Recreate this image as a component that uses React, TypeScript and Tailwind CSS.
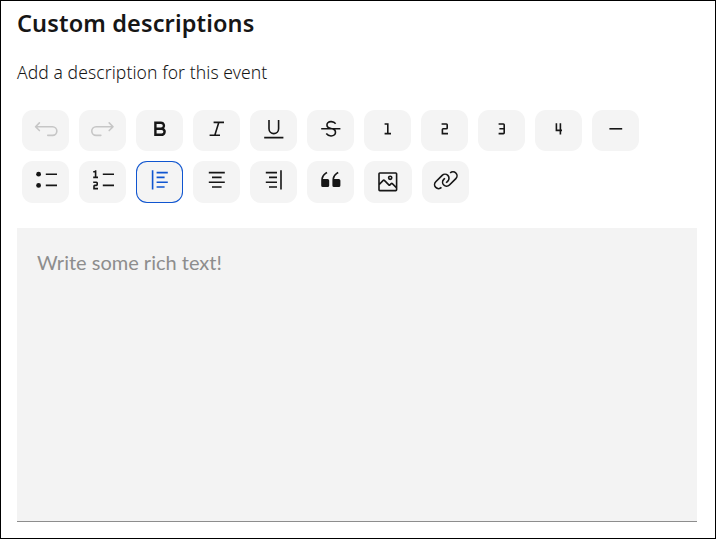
import type { ReactNode } from "react";

type Tool = { label: string; icon: ReactNode; disabled?: boolean; active?: boolean; low?: boolean };

const tools: Tool[] = [
  {
    label: "Undo",
    disabled: true,
    icon: <path fill="none" stroke="currentColor" strokeWidth="2" strokeLinecap="round" strokeLinejoin="round" d="M8 8.6 3.2 13.4 8 18.2M3.2 13.4H24.4a5.4 5.4 0 0 1 0 10.8H18.4" />,
  },
  {
    label: "Redo",
    disabled: true,
    icon: <path fill="none" stroke="currentColor" strokeWidth="2" strokeLinecap="round" strokeLinejoin="round" d="M24 8.6 28.8 13.4 24 18.2M28.8 13.4H7.6a5.4 5.4 0 0 0 0 10.8H13.6" />,
  },
  {
    label: "Bold",
    icon: <path d="M18.25,25H9V7h8.5a5.25,5.25,0,0,1,4,8.65A5.25,5.25,0,0,1,18.25,25ZM12,22h6.23a2.25,2.25,0,1,0,0-4.5H12Zm0-7.5h5.5a2.25,2.25,0,1,0,0-4.5H12Z" />,
  },
  { label: "Italic", icon: <path d="M25 9V7H12v2h5.14L12.77 23H7v2h13v-2h-5.14L19.23 9z" /> },
  { label: "Underline", icon: <path d="M4 26H28V28H4zM16 23a7 7 0 0 1-7-7V5h2V16a5 5 0 0 0 10 0V5h2V16a7 7 0 0 1-7 7z" /> },
  {
    label: "Strikethrough",
    icon: <path d="M28,15H17.9563c-.4522-.1237-.9037-.2324-1.3381-.3352-2.8077-.6641-4.396-1.1506-4.396-3.4231a2.8684,2.8684,0,0,1,.7866-2.145,4.7888,4.7888,0,0,1,3.0137-1.09c2.8291-.07,4.1347.8894,5.2011,2.3484l1.6153-1.1792A7.4727,7.4727,0,0,0,16.0171,6.0054,6.7708,6.7708,0,0,0,11.6147,7.662a4.8269,4.8269,0,0,0-1.3927,3.58A4.3723,4.3723,0,0,0,11.9556,15H4v2H17.6519c1.9668.57,3.143,1.3123,3.1733,3.3579a3.119,3.119,0,0,1-.8623,2.3931A5.8241,5.8241,0,0,1,16.2432,24a6.6342,6.6342,0,0,1-5.1451-2.6912L9.5649,22.593A8.5262,8.5262,0,0,0,16.2119,26h.0088a7.8,7.8,0,0,0,5.1323-1.8081,5.0477,5.0477,0,0,0,1.4722-3.8389A4.9542,4.9542,0,0,0,21.6656,17H28Z" />,
  },
  { label: "Heading 1", icon: <path d="M17 21V9h-5v2h3v10h-3v2h8v-2z" /> },
  { label: "Heading 2", icon: <path d="M20 23H12V17a2 2 0 0 1 2-2h4V11H12V9h6a2 2 0 0 1 2 2v4a2 2 0 0 1-2 2H14v4h6z" /> },
  { label: "Heading 3", icon: <path d="M18 9H12v2h6v4H13v2h5v4H12v2h6a2 2 0 0 0 2-2V11a2 2 0 0 0-2-2z" /> },
  { label: "Heading 4", icon: <path d="M17 9v8h-3V9h-2v10h5v4h2v-4h1v-2h-1V9z" /> },
  { label: "Divider", icon: <path d="M8 15h16v2H8z" /> },
  {
    label: "Bulleted list",
    icon: (
      <>
        <circle cx="7" cy="9" r="3" />
        <circle cx="7" cy="23" r="3" />
        <path d="M16 22H30V24H16zM16 8H30V10H16z" />
      </>
    ),
  },
  {
    label: "Numbered list",
    icon: <path d="M16 22H30V24H16zM16 8H30V10H16zM8 12V4H6v1H4v2h2v5H4v2h6v-2zM10,28H4V24a2,2,0,0,1,2-2H8V20H4V18H8a2,2,0,0,1,2,2v2a2,2,0,0,1-2,2H6v2h4Z" />,
  },
  { label: "Align left", active: true, icon: <path d="M12 6H26V8H12zM12 12H22V14H12zM12 18H26V20H12zM12 24H22V26H12zM6 4H8V28H6z" /> },
  { label: "Align center", icon: <path d="M6 6H26V8H6zM10 12H22V14H10zM6 18H26V20H6zM10 24H22V26H10z" /> },
  { label: "Align right", icon: <path d="M6 6H20V8H6zM10 12H20V14H10zM6 18H20V20H6zM10 24H20V26H10zM24 4H26V28H24z" /> },
  {
    label: "Quote",
    icon: <path d="M12,15H6.11A9,9,0,0,1,10,8.86l1.79-1.2L10.69,6,8.9,7.2A11,11,0,0,0,4,16.35V23a2,2,0,0,0,2,2h6a2,2,0,0,0,2-2V17A2,2,0,0,0,12,15ZM26,15H20.11A9,9,0,0,1,24,8.86l1.79-1.2L24.7,6,22.9,7.2A11,11,0,0,0,18,16.35V23a2,2,0,0,0,2,2h6a2,2,0,0,0,2-2V17A2,2,0,0,0,26,15Z" />,
  },
  {
    label: "Image",
    low: true,
    icon: <path d="M19,14a3,3,0,1,0-3-3A3,3,0,0,0,19,14Zm0-4a1,1,0,1,1-1,1A1,1,0,0,1,19,10ZM26,4H6A2,2,0,0,0,4,6V26a2,2,0,0,0,2,2H26a2,2,0,0,0,2-2V6A2,2,0,0,0,26,4Zm0,22H6V20l5-5,5.59,5.59a2,2,0,0,0,2.82,0L21,19l5,5Zm0-4.83-3.59-3.59a2,2,0,0,0-2.82,0L18,19.17l-5.59-5.59a2,2,0,0,0-2.82,0L6,17.17V6H26Z" />,
  },
  {
    label: "Link",
    icon: <path d="M29.25,6.76a6,6,0,0,0-8.5,0l1.42,1.42a4,4,0,1,1,5.67,5.67l-8,8a4,4,0,1,1-5.67-5.66l1.41-1.42-1.41-1.42-1.42,1.42a6,6,0,0,0,0,8.5A6,6,0,0,0,17,25a6,6,0,0,0,4.27-1.76l8-8A6,6,0,0,0,29.25,6.76ZM4.19,24.82a4,4,0,0,1,0-5.67l8-8a4,4,0,0,1,5.67,0A3.94,3.94,0,0,1,19,14a4,4,0,0,1-1.17,2.85L15.71,19l1.42,1.42,2.12-2.12a6,6,0,0,0-8.51-8.51l-8,8a6,6,0,0,0,0,8.51A6,6,0,0,0,7,28a6.07,6.07,0,0,0,4.28-1.76L9.86,24.82A4,4,0,0,1,4.19,24.82Z" />,
  },
];

function ToolButton({ tool, tall }: { tool: Tool; tall: boolean }) {
  const tone = tool.active
    ? "text-[#0f55d0] ring-1 ring-inset ring-[#0f55d0]"
    : tool.disabled
      ? "text-[#c6c6c6]"
      : "text-[#161616]";
  return (
    <button
      type="button"
      aria-label={tool.label}
      disabled={tool.disabled}
      className={`flex shrink-0 items-start justify-center rounded-[11px] bg-[#f4f4f4] ${tall ? "h-[42px]" : "h-[41px]"} ${tool.low ? "w-12 pr-px pt-[7.6px]" : "w-[47px] pt-[5.6px]"} ${tone}`}
    >
      <svg viewBox="0 0 32 32" fill="currentColor" className="size-[25.6px] shrink-0">
        {tool.icon}
      </svg>
    </button>
  );
}

export default function App() {
  return (
    <main className="flex h-[539px] w-[716px] flex-col border border-black bg-white pl-4 pr-[18px] font-['Noto_Sans',sans-serif] text-[#161616]">
      <h1 className="mt-[6px] h-8 whitespace-nowrap text-[23.5px] font-semibold leading-8 tracking-[0.13px]">Custom descriptions</h1>
      <p className="mt-[21px] h-6 whitespace-nowrap text-[17.5px] font-[350] leading-6 tracking-[0.09px]">Add a description for this event</p>
      <div className="ml-[5px] mt-[26px] flex flex-col gap-2.5">
        <div className="flex gap-2.5">
          {tools.slice(0, 11).map((tool) => (
            <ToolButton key={tool.label} tool={tool} tall={false} />
          ))}
        </div>
        <div className="flex gap-2.5">
          {tools.slice(11).map((tool) => (
            <ToolButton key={tool.label} tool={tool} tall />
          ))}
        </div>
      </div>
      <div className="mt-[25px] h-[294px] border-b border-[#8d8d8d] bg-[#f3f3f3] px-5 pt-[19px] font-['Lato',sans-serif] text-[20px] leading-[30px] text-[#8d8d8d]">
        Write some rich text!
      </div>
    </main>
  );
}
